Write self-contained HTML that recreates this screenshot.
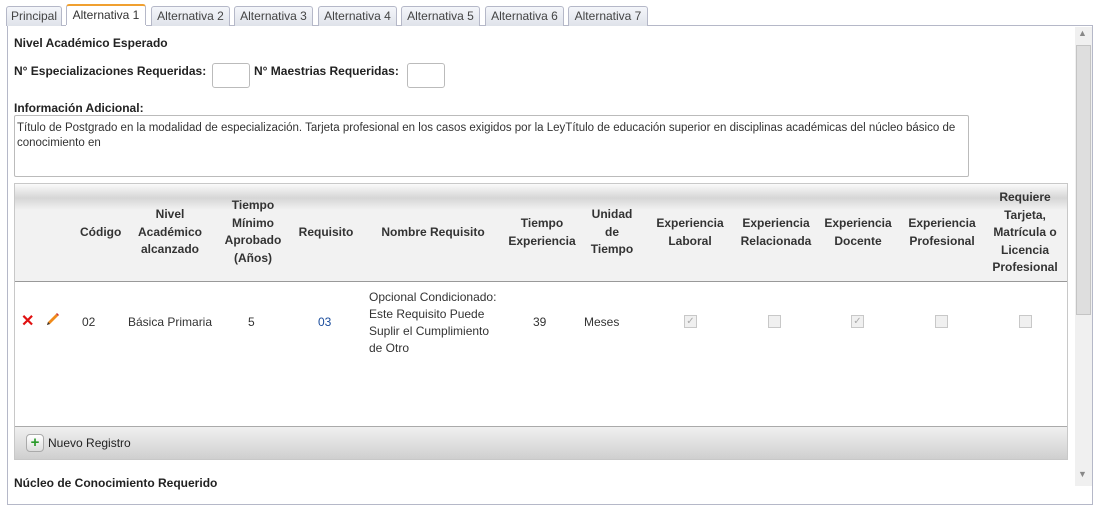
<!DOCTYPE html>
<html><head><meta charset="utf-8"><style>
*{box-sizing:border-box;margin:0;padding:0}
body{width:1099px;height:489px;overflow:hidden;background:#fff;font-family:"Liberation Sans",sans-serif;font-size:12px;color:#222;position:relative}
.a{position:absolute}
.tab{position:absolute;top:6px;height:20px;border:1px solid #b5b8c8;border-bottom:none;background:linear-gradient(#f4f6fa,#dfe3ea);border-radius:3px 3px 0 0;text-align:center;line-height:19px;color:#444;font-size:12px}
.tab.act{background:#fff;border-top:2px solid #f0a030;top:4px;height:23px;color:#333}
b{font-weight:bold;color:#222}
.h{position:absolute;font-weight:bold;text-align:center;font-size:12px;line-height:17.5px;color:#333}
.c{position:absolute;text-align:center;color:#333}
.cb{position:absolute;width:13px;height:13px;border:1px solid #c8c8c8;background:#f0f0f0;top:315px;color:#aaa;font-size:10px;line-height:11px;text-align:center}
</style></head><body>
<div class="a" style="left:7px;top:25px;width:1086px;height:480px;border:1px solid #b5b8c8"></div>
<div class="tab" style="left:6px;width:56px">Principal</div>
<div class="tab act" style="left:66px;width:80px">Alternativa 1</div>
<div class="tab" style="left:151px;width:79px">Alternativa 2</div>
<div class="tab" style="left:234px;width:79px">Alternativa 3</div>
<div class="tab" style="left:318px;width:79px">Alternativa 4</div>
<div class="tab" style="left:401px;width:79px">Alternativa 5</div>
<div class="tab" style="left:485px;width:79px">Alternativa 6</div>
<div class="tab" style="left:568px;width:80px">Alternativa 7</div>
<div class="a" style="left:66px;top:25px;width:80px;height:2px;background:#fff"></div>
<!-- scrollbar -->
<div class="a" style="left:1075px;top:27px;width:17px;height:459px;background:#f0f0f0"></div>
<div class="a" style="left:1076px;top:45px;width:15px;height:270px;background:#dedede;border:1px solid #c4c4c4"></div>
<div class="a" style="left:1078px;top:28px;color:#888;font-size:9px">▲</div>
<div class="a" style="left:1078px;top:469px;color:#888;font-size:9px">▼</div>

<div class="a" style="left:14px;top:36px"><b>Nivel Académico Esperado</b></div>
<div class="a" style="left:14px;top:64px"><b>N° Especializaciones Requeridas:</b></div>
<div class="a" style="left:212px;top:63px;width:38px;height:25px;border:1px solid #bbb;border-radius:3px"></div>
<div class="a" style="left:254px;top:64px"><b>N° Maestrias Requeridas:</b></div>
<div class="a" style="left:407px;top:63px;width:38px;height:25px;border:1px solid #bbb;border-radius:3px"></div>
<div class="a" style="left:14px;top:101px"><b>Información Adicional:</b></div>
<div class="a" style="left:14px;top:115px;width:955px;height:62px;border:1px solid #bbb;border-radius:2px;padding:5px 2px;font-size:11.5px;line-height:15px;color:#333">Título de Postgrado en la modalidad de especialización. Tarjeta profesional en los casos exigidos por la LeyTítulo de educación superior en disciplinas académicas del núcleo básico de conocimiento en</div>

<!-- grid -->
<div class="a" style="left:14px;top:183px;width:1054px;height:277px;border:1px solid #c8c8c8"></div>
<div class="a" style="left:15px;top:184px;width:1052px;height:98px;background:linear-gradient(#fafafa 0px,#d6d6d6 14px,#f2f2f2 26px,#f2f2f2);border-bottom:1px solid #999"></div>
<div class="h" style="left:80px;top:224px;width:44px;overflow:hidden;text-align:left">Código</div>
<div class="h" style="left:125px;top:206px;width:90px">Nivel<br>Académico<br>alcanzado</div>
<div class="h" style="left:215px;top:197px;width:76px">Tiempo<br>Mínimo<br>Aprobado<br>(Años)</div>
<div class="h" style="left:290px;top:224px;width:72px">Requisito</div>
<div class="h" style="left:365px;top:224px;width:136px">Nombre Requisito</div>
<div class="h" style="left:508px;top:215px;width:68px;overflow:hidden;white-space:nowrap">Tiempo<br>Experiencia</div>
<div class="h" style="left:578px;top:206px;width:68px">Unidad<br>de<br>Tiempo</div>
<div class="h" style="left:650px;top:215px;width:80px">Experiencia<br>Laboral</div>
<div class="h" style="left:733px;top:215px;width:86px">Experiencia<br>Relacionada</div>
<div class="h" style="left:818px;top:215px;width:80px">Experiencia<br>Docente</div>
<div class="h" style="left:900px;top:215px;width:84px">Experiencia<br>Profesional</div>
<div class="h" style="left:985px;top:189px;width:80px">Requiere<br>Tarjeta,<br>Matrícula o<br>Licencia<br>Profesional</div>

<div class="a" style="left:21px;top:311px;color:#e01010;font-weight:bold;font-size:16px">✕</div>
<svg class="a" style="left:45px;top:312px" width="15" height="15" viewBox="0 0 15 15"><path d="M2 13 L3 10 L11 2 L13 4 L5 12 Z" fill="#f08a1a"/><path d="M2 13 L3 10 L5 12 Z" fill="#333"/><path d="M11 2 L13 4 L14 3 L12 1Z" fill="#c33"/></svg>
<div class="c" style="left:82px;top:315px">02</div>
<div class="c" style="left:128px;top:315px">Básica Primaria</div>
<div class="c" style="left:248px;top:315px">5</div>
<div class="c" style="left:318px;top:315px;color:#1a4c9c">03</div>
<div class="c" style="left:369px;top:289px;text-align:left;line-height:17px">Opcional Condicionado:<br>Este Requisito Puede<br>Suplir el Cumplimiento<br>de Otro</div>
<div class="c" style="left:533px;top:315px">39</div>
<div class="c" style="left:584px;top:315px">Meses</div>
<div class="cb" style="left:684px">✓</div>
<div class="cb" style="left:768px"></div>
<div class="cb" style="left:851px">✓</div>
<div class="cb" style="left:935px"></div>
<div class="cb" style="left:1019px"></div>

<div class="a" style="left:15px;top:426px;width:1052px;height:33px;background:linear-gradient(#f0f0f0,#cfcfcf);border-top:1px solid #aaa"></div>
<div class="a" style="left:26px;top:434px;width:18px;height:18px;border:1px solid #aaa;border-radius:4px;background:linear-gradient(#fff,#ddd);color:#2a9a2a;font-weight:bold;font-size:15px;line-height:15px;text-align:center">+</div>
<div class="a" style="left:48px;top:436px;color:#222">Nuevo Registro</div>
<div class="a" style="left:14px;top:476px"><b>Núcleo de Conocimiento Requerido</b></div>
</body></html>
